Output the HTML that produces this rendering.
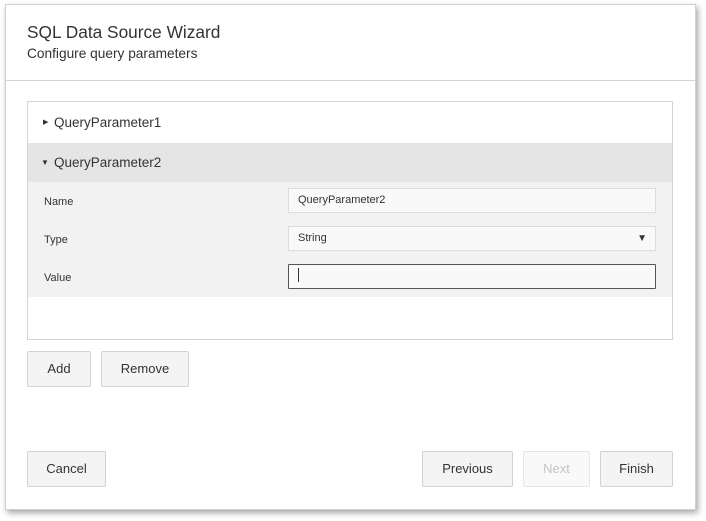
<!DOCTYPE html>
<html><head><style>
body{margin:0;width:706px;height:521px;background:#fff;font-family:"Segoe UI","Liberation Sans",sans-serif;position:relative;overflow:hidden;color:#333}
.dlg{position:absolute;left:5px;top:4px;width:689px;height:504px;background:#fff;border:1px solid #d0d0d0;box-shadow:2px 3px 6px rgba(0,0,0,.35)}
.a{position:absolute}
.title{left:21px;top:17px;font-size:17.3px;color:#333}
.sub{left:21px;top:41px;font-size:13.7px;color:#333}
.hr{left:0;top:75px;width:689px;height:1px;background:#d4d4d4}
.panel{left:21px;top:96px;width:644px;height:237px;border:1px solid #d4d4d4;background:#fff}
.row{position:absolute;left:0;width:644px;font-size:13.5px}
.lbl{position:absolute;left:16px;font-size:11px;color:#333}
.inp{position:absolute;left:260px;height:25px;border:1px solid #dcdcdc;background:#f9f9f9;font-size:11px;line-height:23px;padding-left:9px;box-sizing:border-box;width:368px}
.btn{position:absolute;height:36px;border:1px solid #d2d2d2;border-radius:2px;background:#f4f4f4;font-size:13px;line-height:34px;text-align:center;box-sizing:border-box;color:#333}
</style></head><body>
<div class="dlg">
<div class="a title">SQL Data Source Wizard</div>
<div class="a sub">Configure query parameters</div>
<div class="a hr"></div>
<div class="a panel">
 <div class="row" style="top:0;height:41px;line-height:41px"><span style="position:absolute;left:15px;font-size:7px">&#9654;</span><span style="position:absolute;left:26px">QueryParameter1</span></div>
 <div class="row" style="top:41px;height:39px;line-height:39px;background:#e5e5e5"><span style="position:absolute;left:13px;font-size:8px">&#9660;</span><span style="position:absolute;left:26px">QueryParameter2</span></div>
 <div class="row" style="top:80px;height:115px;background:#f2f2f2">
  <div class="lbl" style="top:14px">Name</div>
  <div class="lbl" style="top:52px">Type</div>
  <div class="lbl" style="top:90px">Value</div>
  <div class="inp" style="top:6px">QueryParameter2</div>
  <div class="inp" style="top:44px">String<span style="position:absolute;right:8px;font-size:10px">&#9660;</span></div>
  <div class="inp" style="top:82px;border-color:#555;border-radius:1px"><span style="display:inline-block;width:1px;height:14px;background:#333;vertical-align:middle;margin-top:-2px"></span></div>
 </div>
</div>
<div class="btn" style="left:21px;top:346px;width:64px">Add</div>
<div class="btn" style="left:95px;top:346px;width:88px">Remove</div>
<div class="btn" style="left:21px;top:446px;width:79px">Cancel</div>
<div class="btn" style="left:416px;top:446px;width:91px">Previous</div>
<div class="btn" style="left:517px;top:446px;width:67px;background:#f9f9f9;border-color:#e6e6e6;color:#c4c4c4">Next</div>
<div class="btn" style="left:594px;top:446px;width:73px">Finish</div>
</div>
</body></html>
